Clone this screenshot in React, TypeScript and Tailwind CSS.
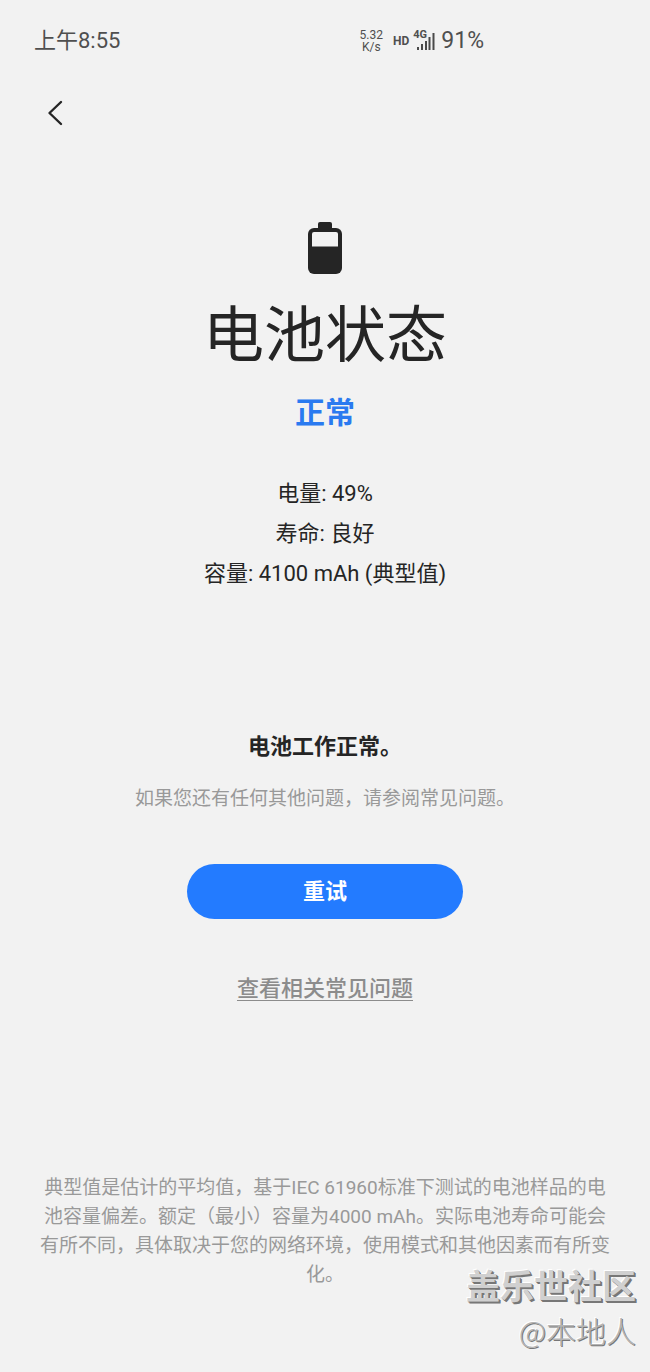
import type { ReactNode } from "react";

const stats = [
  { label: "电量", value: "49%" },
  { label: "寿命", value: "良好" },
  { label: "容量", value: "4100 mAh (典型值)" },
];

function SignalIcon() {
  return (
    <svg viewBox="0 0 18 17" className="w-[18px] h-[17px]" fill="#4a4a4a" aria-hidden="true">
      <rect x="0" y="14" width="2" height="3" />
      <rect x="4" y="11" width="2" height="6" />
      <rect x="8" y="8" width="2" height="9" />
      <rect x="11.5" y="4" width="2" height="13" />
      <rect x="15.5" y="0" width="2" height="17" />
    </svg>
  );
}

function BatteryIcon() {
  return (
    <svg viewBox="0 0 36 52" className="w-9 h-[52px]" aria-hidden="true">
      <rect x="11" y="0" width="14" height="9" rx="2" fill="#252525" />
      <rect x="1" y="6" width="34" height="46" rx="6" fill="#252525" />
      <path d="M5 12a2 2 0 0 1 2-2h22a2 2 0 0 1 2 2v12.500H5z" fill="#f2f2f2" />
    </svg>
  );
}

function StatusBar() {
  return (
    <div className="flex items-center h-[82px] pl-[34px] pr-[166px] text-[#4f4f4f]">
      <span className="text-[22px] leading-8">上午8:55</span>
      <div className="ml-auto flex items-center">
        <div className="text-[12px] leading-3 text-center">
          <div>5.32</div>
          <div>K/s</div>
        </div>
        <span className="ml-[10px] text-[12px] font-bold">HD</span>
        <div className="relative ml-2">
          <SignalIcon />
          <span className="absolute -left-1 -top-1 text-[11px] leading-3 font-bold">4G</span>
        </div>
        <span className="ml-[6px] text-[23px] leading-8">91%</span>
      </div>
    </div>
  );
}

function Watermark({ children }: { children: ReactNode }) {
  return (
    <div className="absolute right-[14px] bottom-5 text-right font-['Noto_Sans_CJK_SC',sans-serif] pointer-events-none">
      {children}
    </div>
  );
}

export default function App() {
  return (
    <div className="relative min-h-screen bg-[#f2f2f2] text-[#252525] font-[Roboto,'Noto_Sans_CJK_SC',sans-serif]" lang="zh-CN">
      <StatusBar />

      <header className="flex px-[35px] h-[62px] items-center">
        <button aria-label="返回" className="flex w-10 h-10 items-center justify-center">
          <svg viewBox="0 0 16 26" className="w-4 h-[26px]" fill="none" stroke="#252525" strokeWidth="2.4" aria-hidden="true">
            <path d="M14 2 2.500 13 14 24" strokeLinecap="round" strokeLinejoin="round" />
          </svg>
        </button>
      </header>

      <main className="flex flex-col items-center px-10 pt-[78px] pb-20 text-center">
        <BatteryIcon />
        <h1 className="mt-6 text-[61px] leading-[76px]">电池状态</h1>
        <p className="mt-[19px] text-[30px] leading-10 font-bold text-[#2a7af0]">正常</p>

        <ul className="mt-[41px] text-[22px] leading-10">
          {stats.map((s) => (
            <li key={s.label}>
              {s.label}: {s.value}
            </li>
          ))}
        </ul>

        <h2 className="mt-[137px] text-[22px] leading-8 font-bold">电池工作正常。</h2>
        <p className="mt-5 text-[19px] leading-8 text-[#999999]">如果您还有任何其他问题，请参阅常见问题。</p>

        <button className="mt-[49px] w-[276px] h-[55px] rounded-full bg-[#237bff] text-[22px] font-bold text-white">
          重试
        </button>
        <a href="#" className="mt-[54px] text-[22px] leading-8 font-medium text-[#8c8c8c] underline decoration-1 underline-offset-4">
          查看相关常见问题
        </a>

        <p className="mt-[168px] text-[19px] leading-[29px] text-[#999999]">
          典型值是估计的平均值，基于IEC 61960标准下测试的电池样品的电池容量偏差。额定（最小）容量为4000 mAh。实际电池寿命可能会有所不同，具体取决于您的网络环境，使用模式和其他因素而有所变化。
        </p>
      </main>

      <Watermark>
        <div className="text-[34px] leading-[46px] font-bold text-[#d0d0d0] [text-shadow:1px_1px_0_#777777,2px_2px_0_#777777,-1px_-1px_0_#ffffff]">
          盖乐世社区
        </div>
        <div className="text-[30px] leading-[44px] font-light text-[#b4b4b4] [text-shadow:1px_1px_0_#777777,-1px_-1px_0_#ffffff]">
          @本地人
        </div>
      </Watermark>
    </div>
  );
}
